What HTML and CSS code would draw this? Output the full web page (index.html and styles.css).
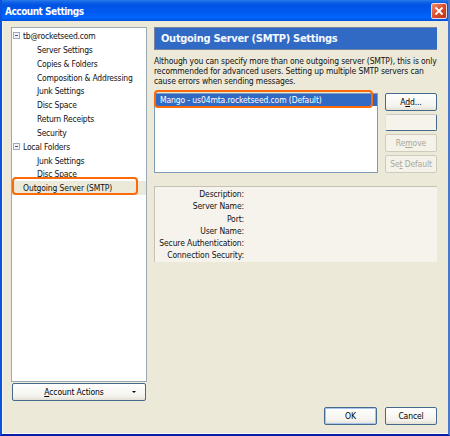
FILE: index.html
```html
<!DOCTYPE html>
<html lang="en">
<head>
    <meta charset="UTF-8">
    <title>Account Settings</title>
    <link rel="stylesheet" href="styles.css">
</head>
<body>
    <div class="window">
        <div class="titlebar">
            <h1>Account Settings</h1>
            <button class="close" aria-label="Close">
                <svg width="16" height="16" viewBox="0 0 16 16"><path d="M4.5 4.5l7 7M11.5 4.5l-7 7" stroke="#fff" stroke-width="1.8"/></svg>
            </button>
        </div>

        <div class="content">
            <div class="sidebar">
                <ul class="tree">
                    <li class="account"><i class="toggle"></i>tb@rocketseed.com</li>
                    <li>Server Settings</li>
                    <li>Copies &amp; Folders</li>
                    <li>Composition &amp; Addressing</li>
                    <li>Junk Settings</li>
                    <li>Disc Space</li>
                    <li>Return Receipts</li>
                    <li>Security</li>
                    <li class="account"><i class="toggle"></i>Local Folders</li>
                    <li>Junk Settings</li>
                    <li>Disc Space</li>
                    <li class="account selected">Outgoing Server (SMTP)<b class="marker"></b></li>
                </ul>
                <button class="btn actions"><span><u>A</u>ccount Actions</span><i class="arrow"></i></button>
            </div>

            <div class="main">
                <h2>Outgoing Server (SMTP) Settings</h2>
                <p class="intro">Although you can specify more than one outgoing server (SMTP), this is only<br>recommended for advanced users. Setting up multiple SMTP servers can<br>cause errors when sending messages.</p>

                <div class="servers">
                    <div class="list">
                        <div class="server">Mango - us04mta.rocketseed.com (Default)</div>
                        <b class="marker"></b>
                    </div>
                    <div class="list-buttons">
                        <button class="btn">A<u>d</u>d...</button>
                        <button class="btn blank"></button>
                        <button class="btn disabled">Re<u>m</u>ove</button>
                        <button class="btn disabled">Se<u>t</u> Default</button>
                    </div>
                </div>

                <div class="details">
                    <div>Description:</div>
                    <div>Server Name:</div>
                    <div>Port:</div>
                    <div>User Name:</div>
                    <div>Secure Authentication:</div>
                    <div>Connection Security:</div>
                </div>

                <div class="footer">
                    <button class="btn ok">OK</button>
                    <button class="btn">Cancel</button>
                </div>
            </div>
        </div>
    </div>
</body>
</html>
```

FILE: styles.css
```css
* { box-sizing: border-box; }
body {
    margin: 0;
    font-family: "DejaVu Sans Condensed", "DejaVu Sans", sans-serif;
    font-stretch: condensed;
    font-size: 8.5px;
    letter-spacing: -0.12px;
    color: #111;
}
.window {
    width: 450px;
    height: 436px;
    overflow: hidden;
    background: #ece9d8;
    border: solid #0b52dc;
    border-width: 0 2px 2px;
    border-right-color: #4878cc;
    border-bottom-color: #0820a8;
}
.titlebar {
    display: flex;
    align-items: center;
    justify-content: space-between;
    height: 21px;
    margin: 0 -2px;
    padding: 0 3px 0 5px;
    background: linear-gradient(#2a7be8 0, #1565e8 2px, #0054e3 5px, #0058ee 11px, #0066ff 18px, #0050d8 21px);
}
h1 {
    margin: 0;
    padding-top: 1px;
    font-family: "DejaVu Sans Condensed", sans-serif;
    font-size: 10px;
    letter-spacing: -0.5px;
    color: #fff;
}
.close {
    width: 16px;
    height: 16px;
    padding: 0;
    border: 1px solid #f4d8d8;
    border-radius: 2px;
    background: linear-gradient(135deg, #ee8c6c, #dc4c2c 50%, #bc3418);
}
.close svg { display: block; margin: -1px; }
.content {
    display: flex;
    gap: 7px;
    height: 413px;
    padding: 6px 11px 8px 9px;
    border-left: 1px solid #f8f7f0;
    border-bottom: 1px solid #faf9f2;
}
.sidebar { width: 136px; margin-left: -1px; }
.tree {
    height: 355px;
    margin: 0;
    padding: 1px 0 0;
    list-style: none;
    background: #fff;
    border: 1px solid #9aabb5;
    letter-spacing: -0.22px;
}
.tree li {
    height: 13.85px;
    padding-left: 25px;
    line-height: 14px;
    white-space: nowrap;
}
.tree .account {
    display: flex;
    align-items: center;
    padding-left: 1px;
}
.toggle {
    width: 7px;
    height: 7px;
    margin-right: 3px;
    border: 1px solid #a0a8c4;
    background: linear-gradient(#4a5478, #4a5478) center / 3px 1px no-repeat #f4f4f8;
}
.tree .selected {
    position: relative;
    padding-left: 11px;
    letter-spacing: -0.12px;
    background: #ece9d8;
}
.marker {
    position: absolute;
    border: 2px solid #fc6a0a;
    border-radius: 4px;
}
.selected .marker {
    left: 0;
    top: -4px;
    width: 126px;
    height: 18px;
}
.btn {
    width: 52px;
    height: 18px;
    padding: 0;
    font: inherit;
    letter-spacing: inherit;
    color: #000;
    border: 1px solid #456a8c;
    border-radius: 2px;
    background: linear-gradient(#fff, #f4f3ee 75%, #e4e0d4);
}
.btn u { text-underline-offset: 1px; }
.btn.actions {
    display: flex;
    align-items: center;
    justify-content: center;
    position: relative;
    width: 134px;
    margin: 1px 0 0 1px;
    padding-right: 10px;
}
.arrow {
    position: absolute;
    right: 9px;
    top: 7px;
    border: solid transparent;
    border-width: 2px 2px 0;
    border-top-color: #000;
}
.main {
    display: flex;
    flex-direction: column;
    width: 283px;
}
h2 {
    height: 23px;
    margin: 0;
    padding-left: 6px;
    font-size: 11px;
    line-height: 22px;
    letter-spacing: -0.29px;
    color: #f4f8ff;
    background: #316ac5;
    border: 1px solid #7684a0;
    border-right-width: 0;
}
.intro {
    height: 43px;
    margin: 0;
    padding-top: 6px;
    line-height: 10px;
    letter-spacing: -0.14px;
    white-space: nowrap;
}
.servers {
    display: flex;
    justify-content: space-between;
}
.list {
    position: relative;
    width: 224px;
    height: 80px;
    background: #fff;
    border: 1px solid #7f9db9;
}
.server {
    height: 12px;
    padding-left: 5px;
    line-height: 13px;
    color: #fff;
    background: #316ac5;
}
.list .marker {
    left: -1px;
    top: -4px;
    width: 219px;
    height: 18px;
}
.list-buttons {
    display: flex;
    flex-direction: column;
    gap: 3px;
    width: 52px;
}
.list-buttons .btn { height: 17.7px; }
.btn.blank {
    background: #f5f3ea;
    border-top-color: #c8ccc8;
    border-left-color: #e4e2d6;
}
.btn.disabled {
    color: #aaa899;
    background: #f4f2e9;
    border-color: #cfccbc;
}
.details {
    height: 76px;
    margin-top: 13px;
    padding: 1px 193px 0 0;
    line-height: 12.25px;
    text-align: right;
    white-space: nowrap;
    background: #f5f3ec;
    border-top: 1px solid #c4c2b4;
    border-left: 1px solid #c4c2b4;
}
.footer {
    display: flex;
    justify-content: flex-end;
    gap: 8px;
    margin-top: auto;
}
.ok {
    width: 53px;
    box-shadow: inset 0 0 0 1px #a8c4f0;
}
```
